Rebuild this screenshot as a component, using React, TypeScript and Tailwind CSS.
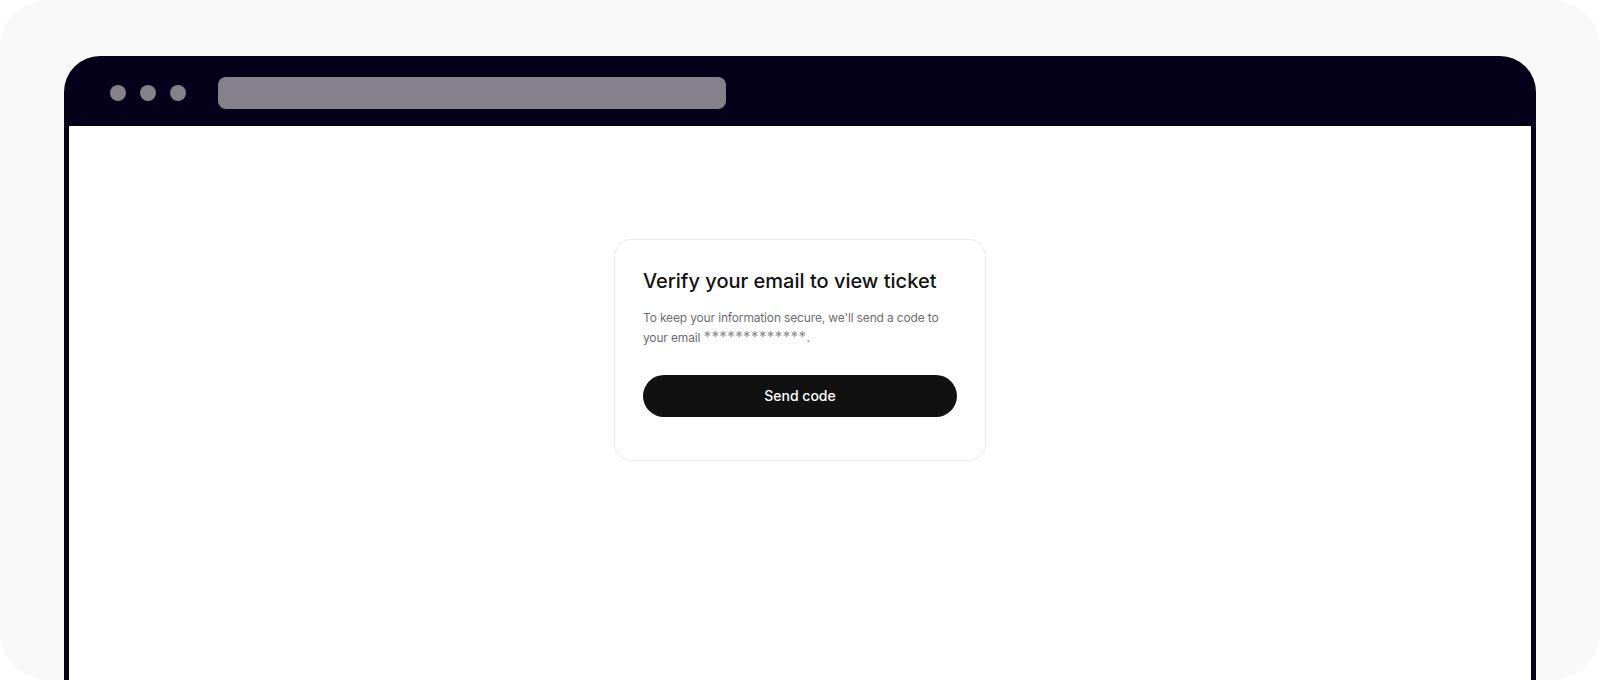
export default function App() {
  return (
    <div className="h-[680px] w-full overflow-hidden bg-white font-['Inter','Liberation_Sans',sans-serif]">
      <div className="flex h-full flex-col rounded-[48px] bg-[#f8f8f8] px-[64px] pt-[56px]">
        <div className="flex flex-1 flex-col rounded-t-[36px] bg-[#05001a] px-[5px]">
          <BrowserBar />
          <main className="flex-1 bg-white pt-[113px]">
            <VerifyCard />
          </main>
        </div>
      </div>
    </div>
  );
}

function BrowserBar() {
  return (
    <div className="flex h-[70px] items-center pl-[41px] pt-1">
      <div className="flex gap-[14px]">
        <span className="h-4 w-4 rounded-full bg-[#85818b]" />
        <span className="h-4 w-4 rounded-full bg-[#85818b]" />
        <span className="h-4 w-4 rounded-full bg-[#85818b]" />
      </div>
      <div className="ml-[32px] h-8 w-[508px] rounded-lg bg-[#85818b]" />
    </div>
  );
}

function VerifyCard() {
  return (
    <div className="mx-auto w-[372px] rounded-[18px] border border-[#ebebeb] bg-white px-[28px] pb-[43px] pt-[27px]">
      <h1 className="text-[20px] leading-7 font-medium text-[#111]">
        Verify your email to view ticket
      </h1>
      <p className="mt-[13px] text-[12px] leading-5 tracking-[-0.15px] text-[#6e6e6e]">
        To keep your information secure, we&apos;ll send a code to your email{' '}
        <span className="text-[15px] leading-none tracking-[0.4px] text-[#8c8c8c]">*************</span>.
      </p>
      <button
        type="button"
        className="mt-[27px] flex h-[42px] w-full items-center justify-center rounded-full bg-[#111] text-sm font-medium text-white"
      >
        Send code
      </button>
    </div>
  );
}
